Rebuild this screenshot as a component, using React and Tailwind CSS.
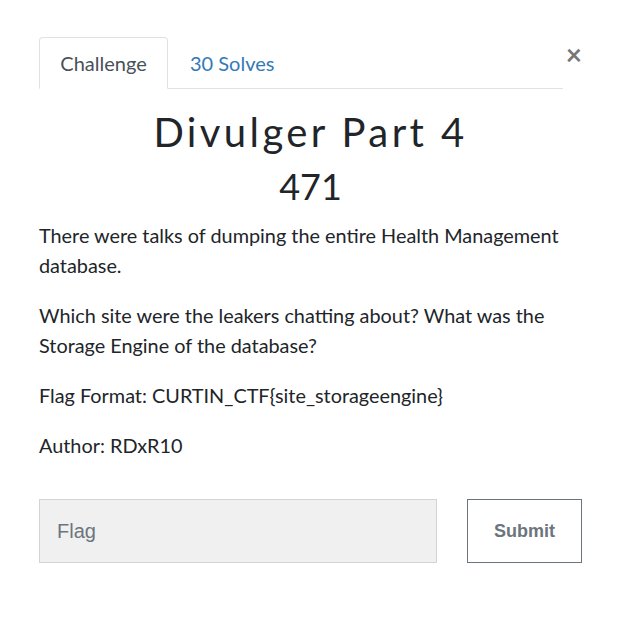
import React, { useState } from 'react';

const App = () => {
    const [flag, setFlag] = useState('');

    return (
        <div className="w-[621px] h-[621px] bg-white" style={{ fontFamily: 'Lato, "Noto Sans", sans-serif' }}>
            <div className="relative pt-[37px] px-[39px]">
                <button className="absolute right-[39px] top-[40px] text-[#777] text-[28px] leading-none font-bold">×</button>

                {/* Tabs */}
                <div className="flex w-[524px] border-b border-[#dee2e6]">
                    <div className="h-[52px] w-[129px] -mb-px flex items-center justify-center border border-[#dee2e6] border-b-white rounded-t-[4px] bg-white text-[20px] text-[#495057]">
                        Challenge
                    </div>
                    <div className="h-[51px] px-[22px] flex items-center text-[20px] text-[#337ab7]">30 Solves</div>
                </div>

                {/* Header */}
                <h1 className="mt-[16px] text-center text-[40px] leading-[54px] tracking-[3.4px] text-[#212529]" style={{ fontFamily: 'Lato, sans-serif', fontWeight: 400 }}>
                    Divulger Part 4
                </h1>
                <div className="mt-[4px] text-center text-[36px] leading-[46px] text-[#212529]" style={{ fontFamily: 'Lato, sans-serif' }}>471</div>

                {/* Description */}
                <div className="mt-[11px] text-[19.85px] leading-[30px] text-[#212529]">
                    <p className="mb-[20px]">There were talks of dumping the entire Health Management database.</p>
                    <p className="mb-[20px]">Which site were the leakers chatting about? What was the Storage Engine of the database?</p>
                    <p className="mb-[20px]">Flag Format: CURTIN_CTF{'{'}site_storageengine{'}'}</p>
                    <p>Author: RDxR10</p>
                </div>

                {/* Submit row */}
                <div className="mt-[39px] flex justify-between">
                    <input
                        type="text"
                        value={flag}
                        onChange={(e) => setFlag(e.target.value)}
                        placeholder="Flag"
                        className="w-[398px] h-[64px] px-[17px] bg-[#f0f0f0] border border-[#d4d4d4] text-[20px] text-[#495057] placeholder-[#6c757d] outline-none"
                        style={{ fontFamily: '"Liberation Sans", Arial, sans-serif' }}
                    />
                    <button
                        className="w-[115px] h-[64px] border border-[#6c757d] bg-white text-[18px] font-bold text-[#6c757d]"
                        style={{ fontFamily: '"Liberation Sans", Arial, sans-serif' }}
                    >
                        Submit
                    </button>
                </div>
            </div>
        </div>
    );
};

export default App;
